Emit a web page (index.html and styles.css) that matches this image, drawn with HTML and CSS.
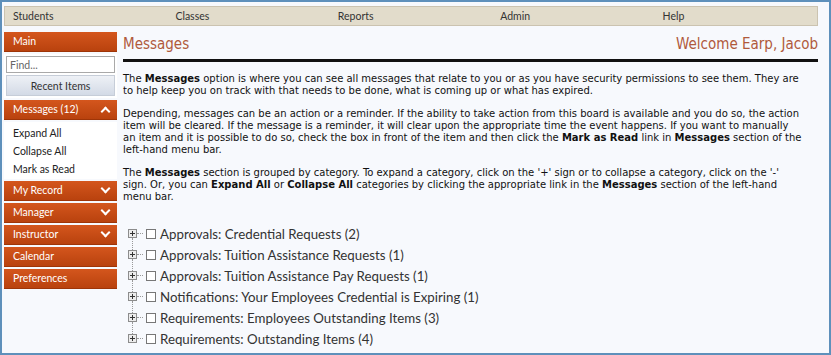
FILE: index.html
```html
<!DOCTYPE html>
<html lang="en">
<head>
    <meta charset="UTF-8">
    <title>Messages</title>
    <link rel="stylesheet" href="styles.css">
</head>
<body>
    <div class="frame">
        <div class="topnav">
            <a href="#">Students</a>
            <a href="#">Classes</a>
            <a href="#">Reports</a>
            <a href="#">Admin</a>
            <a href="#">Help</a>
        </div>
        <div class="layout">
            <div class="sidebar">
                <div class="menu-head">Main</div>
                <div class="search-box">
                    <input type="text" class="find" placeholder="Find...">
                    <button class="recent">Recent Items</button>
                </div>
                <div class="menu-head">Messages (12) <span class="chev up"></span></div>
                <div class="menu-links">
                    <a href="#">Expand All</a>
                    <a href="#">Collapse All</a>
                    <a href="#">Mark as Read</a>
                </div>
                <div class="menu-head">My Record <span class="chev"></span></div>
                <div class="menu-head">Manager <span class="chev"></span></div>
                <div class="menu-head">Instructor <span class="chev"></span></div>
                <div class="menu-head">Calendar</div>
                <div class="menu-head">Preferences</div>
            </div>
            <div class="content">
                <div class="page-head">
                    <h1>Messages</h1>
                    <div class="welcome">Welcome Earp, Jacob</div>
                </div>
                <div class="intro">
                    <p>The <b>Messages</b> option is where you can see all messages that relate to you or as you have security permissions to see them. They are to help keep you on track with that needs to be done, what is coming up or what has expired.</p>
                    <p>Depending, messages can be an action or a reminder. If the ability to take action from this board is available and you do so, the action item will be cleared. If the message is a reminder, it will clear upon the appropriate time the event happens. If you want to manually an item and it is possible to do so, check the box in front of the item and then click the <b>Mark as Read</b> link in <b>Messages</b> section of the left-hand menu bar.</p>
                    <p>The <b>Messages</b> section is grouped by category. To expand a category, click on the '+' sign or to collapse a category, click on the '-' sign. Or, you can <b>Expand All</b> or <b>Collapse All</b> categories by clicking the appropriate link in the <b>Messages</b> section of the left-hand menu bar.</p>
                </div>
                <ul class="tree">
                    <li><span class="expander"></span><span class="check"></span>Approvals: Credential Requests (2)</li>
                    <li><span class="expander"></span><span class="check"></span>Approvals: Tuition Assistance Requests (1)</li>
                    <li><span class="expander"></span><span class="check"></span>Approvals: Tuition Assistance Pay Requests (1)</li>
                    <li><span class="expander"></span><span class="check"></span>Notifications: Your Employees Credential is Expiring (1)</li>
                    <li><span class="expander"></span><span class="check"></span>Requirements: Employees Outstanding Items (3)</li>
                    <li class="last"><span class="expander"></span><span class="check"></span>Requirements: Outstanding Items (4)</li>
                </ul>
            </div>
        </div>
    </div>
</body>
</html>
```

FILE: styles.css
```css
body {
    margin: 0;
    font-family: Lato, "Liberation Sans", Arial, sans-serif;
}

.frame {
    width: 831px;
    height: 355px;
    box-sizing: border-box;
    border: 2px solid #5e90bb;
    background: #f7f9fd;
    padding: 4px 11px 0 2px;
    overflow: hidden;
}

.topnav {
    display: grid;
    grid-template-columns: repeat(5, 1fr);
    height: 20px;
    box-sizing: border-box;
    background: #e2dccb;
    border: 1px solid #cbc3b0;
    margin-bottom: 6px;
}

.topnav a {
    font-size: 10.5px;
    line-height: 18px;
    color: #333;
    text-decoration: none;
    padding-left: 8px;
}

.layout {
    display: flex;
    gap: 6px;
}

.sidebar {
    width: 113px;
    flex: none;
    display: flex;
    flex-direction: column;
    gap: 2px;
}

.menu-head {
    position: relative;
    height: 20px;
    box-sizing: border-box;
    line-height: 19px;
    padding-left: 9px;
    font-size: 10.5px;
    color: #fff;
    background: linear-gradient(#d4561d, #b9420e);
    border-bottom: 1px solid #9e3508;
}

.chev {
    position: absolute;
    right: 8px;
    top: 4px;
    width: 5px;
    height: 5px;
    border-right: 2px solid #fff;
    border-bottom: 2px solid #fff;
    transform: rotate(45deg);
}

.chev.up {
    top: 8px;
    transform: rotate(-135deg);
}

.search-box {
    background: #fff;
    padding: 2px;
    display: flex;
    flex-direction: column;
    gap: 2px;
}

.find {
    height: 17px;
    box-sizing: border-box;
    border: 1px solid #a9a9a9;
    font-size: 10.5px;
    padding: 0 3px;
    font-family: inherit;
}

.find::placeholder {
    color: #666;
}

.recent {
    height: 21px;
    border: 1px solid #c6cdd8;
    background: linear-gradient(#eef1f6, #d3dae6);
    font-size: 10.5px;
    font-family: inherit;
    color: #333;
}

.menu-links {
    background: #fff;
    padding: 2px 0 1px 0;
    display: flex;
    flex-direction: column;
}

.menu-links a {
    font-size: 10.5px;
    line-height: 18px;
    color: #222;
    text-decoration: none;
    padding-left: 9px;
}

.content {
    flex: 1;
    padding-top: 3px;
}

.page-head {
    display: flex;
    justify-content: space-between;
    align-items: flex-end;
    border-bottom: 3px solid #111;
    padding-bottom: 6px;
    color: #b05a3c;
    font-family: "DejaVu Sans Condensed", "DejaVu Sans", Verdana, sans-serif;
    font-size: 15px;
}

.page-head h1 {
    margin: 0;
    font-weight: normal;
    font-size: 15px;
}

.intro {
    padding: 11px 15px 0 0;
}

.intro p {
    margin: 0 0 11px 0;
    font-family: "DejaVu Sans", Verdana, sans-serif;
    font-size: 10px;
    line-height: 12px;
    color: #111;
}

.tree {
    list-style: none;
    margin: 20px 0 0 0;
    padding: 0 0 0 5px;
}

.tree li {
    position: relative;
    display: flex;
    align-items: center;
    height: 21px;
    font-size: 13.3px;
    color: #333;
}

.expander {
    position: relative;
    width: 9px;
    height: 9px;
    box-sizing: border-box;
    border: 1px solid #8c8c8c;
    background: #ececec;
    margin-right: 9px;
}

.expander::before {
    content: "";
    position: absolute;
    left: 1px;
    top: 3px;
    width: 5px;
    height: 1px;
    background: #333;
}

.expander::after {
    content: "";
    position: absolute;
    left: 3px;
    top: 1px;
    width: 1px;
    height: 5px;
    background: #333;
}

/* dotted connectors of the tree */
.tree li::before {
    content: "";
    position: absolute;
    left: 9px;
    top: 10px;
    width: 6px;
    border-top: 1px dotted #999;
}

.tree li::after {
    content: "";
    position: absolute;
    left: 4px;
    top: 15px;
    height: 12px;
    border-left: 1px dotted #999;
}

.tree li.last::after {
    display: none;
}

.check {
    width: 10px;
    height: 10px;
    box-sizing: border-box;
    border: 1px solid #777;
    background: #fff;
    margin-right: 4px;
}
```
